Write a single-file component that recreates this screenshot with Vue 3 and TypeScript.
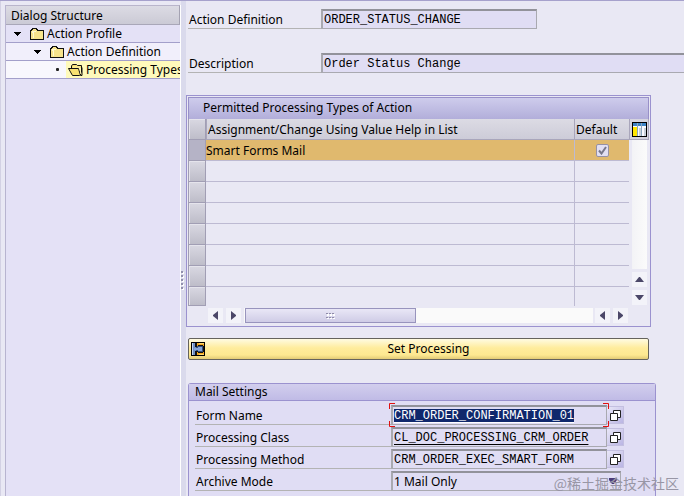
<script setup lang="ts">
import { onMounted, ref } from 'vue'

interface TreeNode {
  label: string
  level: number
  kind: 'branch' | 'leaf'
}

interface MailField {
  id: string
  label: string
  value: string
  underlined: boolean
}

const nodes: TreeNode[] = [
  { label: 'Action Profile', level: 0, kind: 'branch' },
  { label: 'Action Definition', level: 1, kind: 'branch' },
  { label: 'Processing Types', level: 2, kind: 'leaf' },
]

const action = ref('ORDER_STATUS_CHANGE')
const description = ref('Order Status Change')
const emptyRows = 7
const isDefault = ref(true)

const mailFields = ref<MailField[]>([
  { id: 'form-name', label: 'Form Name', value: 'CRM_ORDER_CONFIRMATION_01', underlined: true },
  { id: 'proc-class', label: 'Processing Class', value: 'CL_DOC_PROCESSING_CRM_ORDER', underlined: true },
  { id: 'proc-method', label: 'Processing Method', value: 'CRM_ORDER_EXEC_SMART_FORM', underlined: false },
])
const archiveMode = ref('1 Mail Only')

onMounted(() => {
  const field = document.getElementById('form-name') as HTMLInputElement | null
  field?.focus()
  field?.select()
})
</script>

<template>
  <div class="app">
    <nav class="sidebar" aria-label="Dialog Structure">
      <h2 class="tree-title">Dialog Structure</h2>
      <ul class="tree">
        <li v-for="node in nodes" :key="node.label" class="node" :class="['level-' + node.level, node.kind]">
          <button v-if="node.kind === 'branch'" class="toggle" type="button" :aria-label="'Collapse ' + node.label">
            <svg width="7" height="4" viewBox="0 0 7 4"><path d="M0 0h7v1H6v1H5v1H4v1H3V3H2V2H1V1H0z" fill="#000" /></svg>
          </button>
          <span v-else class="bullet"></span>
          <a class="node-link" href="#">
            <svg v-if="node.kind === 'branch'" width="15" height="12" viewBox="0 0 15 12" shape-rendering="crispEdges">
              <path d="M1 2h1V1h5v1h1v1h5v1h1v7H1z" fill="#f7e48c" />
              <path d="M2 3h4M2 4h1v6" stroke="#fffbd0" fill="none" />
              <path d="M.5 11.500V2.500h1v-1h1v-1h4v1h1v1h6v9z" fill="none" stroke="#111" />
            </svg>
            <svg v-else width="16" height="12" viewBox="0 0 16 12">
              <path d="M3.500 4.500V2l1-1.500h4l1 1h4v8l-2 2h-7l-4-7h10l2 7h1.500v-8" fill="#f7e070" stroke="#111" />
              <path d="M5 3h7M12 5l1 5" stroke="#fff6b0" fill="none" />
            </svg>
            <span>{{ node.label }}</span>
          </a>
        </li>
      </ul>
    </nav>

    <div class="splitter" role="separator" aria-orientation="vertical">
      <i v-for="n in 5" :key="n"></i>
    </div>

    <main class="content">
      <form class="head" @submit.prevent>
        <div class="line">
          <label class="caption" for="action">Action Definition</label>
          <input id="action" v-model="action" class="field short" type="text" readonly />
        </div>
        <div class="line">
          <label class="caption" for="description">Description</label>
          <input id="description" v-model="description" class="field long" type="text" readonly />
        </div>
      </form>

      <section class="panel">
        <h2 class="panel-title">Permitted Processing Types of Action</h2>
        <div class="grid">
          <table class="types">
            <colgroup>
              <col class="c-select" />
              <col />
              <col class="c-default" />
            </colgroup>
            <thead>
              <tr>
                <th class="selector"></th>
                <th>Assignment/Change Using Value Help in List</th>
                <th>Default</th>
              </tr>
            </thead>
            <tbody>
              <tr class="chosen">
                <td class="selector"></td>
                <td>Smart Forms Mail</td>
                <td class="check-cell">
                  <label class="check">
                    <input v-model="isDefault" type="checkbox" aria-label="Default" />
                    <svg width="9" height="9" viewBox="0 0 9 9"><path d="M1 4.500 3.500 7.500 8 1" fill="none" stroke="#77778a" stroke-width="2" /></svg>
                  </label>
                </td>
              </tr>
              <tr v-for="n in emptyRows" :key="n">
                <td class="selector"></td>
                <td></td>
                <td></td>
              </tr>
            </tbody>
          </table>

          <div class="side">
            <button class="config" type="button" aria-label="Table settings">
              <svg width="15" height="15" viewBox="0 0 15 15" shape-rendering="crispEdges">
                <path d="M0 0h15v15H0z" fill="#000" />
                <path d="M1 1h13v13H1z" fill="#fafaff" />
                <path d="M1 1h13v3H1z" fill="#3d83c5" />
                <path d="M1 5h4v9H1z" fill="#ffe600" />
                <path d="M5 1h1v13H5zM9 1h1v13H9z" fill="#8aa6bd" />
                <path d="M7 6h2v8H7zM12 6h2v8h-2z" fill="#c9d0d8" />
              </svg>
            </button>
            <div class="v-track"></div>
            <button class="arrow" type="button" aria-label="Scroll up">
              <svg width="9" height="5" viewBox="0 0 9 5"><path d="M0 5 4 0h1l4 5z" fill="#4b4768" /></svg>
            </button>
            <button class="arrow" type="button" aria-label="Scroll down">
              <svg width="9" height="5" viewBox="0 0 9 5"><path d="M0 0 4 5h1l4-5z" fill="#4b4768" /></svg>
            </button>
          </div>
        </div>

        <div class="h-scroll">
          <button class="arrow" type="button" aria-label="Scroll to start">
            <svg width="5" height="9" viewBox="0 0 5 9"><path d="M5 0 0 4v1l5 4z" fill="#4b4768" /></svg>
          </button>
          <button class="arrow" type="button" aria-label="Scroll left">
            <svg width="5" height="9" viewBox="0 0 5 9"><path d="M0 0 5 4v1l-5 4z" fill="#4b4768" /></svg>
          </button>
          <div class="h-track">
            <div class="thumb">
              <svg width="9" height="6" viewBox="0 0 9 6" shape-rendering="crispEdges">
                <path d="M1 1h2v2H1zM4 1h2v2H4zM7 1h2v2H7zM1 5h2v1H1zM4 5h2v1H4zM7 5h2v1H7z" fill="#fff" />
                <path d="M0 0h2v1H0zM3 0h2v1H3zM6 0h2v1H6zM0 4h2v1H0zM3 4h2v1H3zM6 4h2v1H6z" fill="#8f8ba8" />
              </svg>
            </div>
          </div>
          <button class="arrow" type="button" aria-label="Scroll right">
            <svg width="5" height="9" viewBox="0 0 5 9"><path d="M5 0 0 4v1l5 4z" fill="#4b4768" /></svg>
          </button>
          <button class="arrow" type="button" aria-label="Scroll to end">
            <svg width="5" height="9" viewBox="0 0 5 9"><path d="M0 0 5 4v1l-5 4z" fill="#4b4768" /></svg>
          </button>
        </div>
      </section>

      <button class="set-processing" type="button">
        <svg width="14" height="14" viewBox="0 0 14 14" shape-rendering="crispEdges">
          <path d="M0 0h14v14H0z" fill="#000" />
          <path d="M1 1h12v12H1z" fill="#f3a71f" />
          <path d="M1 1h4v12H1z" fill="#6f8fc4" />
          <path d="M1 1h1v12H1z" fill="#c3d5ef" />
          <path d="M4 1h2v3h1V3h5v1h1v6h-1v1H7v-1H6v3H4V9h2V5H4z" fill="#111" />
          <path d="M5 5h1V4h6v6H7V9H5z" fill="#34507f" />
          <path d="M3 6h4V5h4v4H7V8H3z" fill="#86a5d8" />
          <path d="M8 1h5v1H8zM8 12h5v1H8z" fill="#ffd76a" />
        </svg>
        <span>Set Processing</span>
      </button>

      <section class="mail">
        <h2 class="mail-title">Mail Settings</h2>
        <form class="mail-form" @submit.prevent>
          <div v-for="(field, index) in mailFields" :key="field.id" class="line">
            <label class="caption" :for="field.id">{{ field.label }}</label>
            <div class="holder" :class="{ active: index === 0 }">
              <input :id="field.id" v-model="field.value" class="field" :class="{ underlined: field.underlined }" type="text" spellcheck="false" />
              <svg v-if="index === 0" class="corner left" width="6" height="24" viewBox="0 0 6 24"><path d="M6 .5H.5V6M.5 18v5.500H6" fill="none" stroke="#e01010" /></svg>
              <svg v-if="index === 0" class="corner right" width="6" height="24" viewBox="0 0 6 24"><path d="M0 .5h5.500V6M5.500 18v5.500H0" fill="none" stroke="#e01010" /></svg>
            </div>
            <button class="help" type="button" :aria-label="'Value help for ' + field.label">
              <svg width="11" height="11" viewBox="0 0 11 11">
                <path d="M3.500.5h7v7h-7z" fill="#fff" stroke="#222" />
                <path d="M.5 3.500h7v7h-7z" fill="#fff" stroke="#222" />
              </svg>
            </button>
          </div>
          <div class="line">
            <label class="caption" for="archive">Archive Mode</label>
            <div class="select-holder">
              <select id="archive" v-model="archiveMode" class="field">
                <option>1 Mail Only</option>
              </select>
              <svg class="caret" width="8" height="6" viewBox="0 0 8 6"><path d="M0 0h8v2L5 6H3L0 2z" fill="#4b3a78" /></svg>
            </div>
          </div>
        </form>
      </section>
    </main>

    <div class="watermark">@稀土掘金技术社区</div>
  </div>
</template>

<style>
body {
  margin: 0;
}
</style>

<style scoped>
* {
  box-sizing: border-box;
}

.app {
  position: relative;
  display: grid;
  grid-template-columns: 176px 5px minmax(0, 1fr);
  height: 100vh;
  min-height: 496px;
  padding-left: 5px;
  overflow: hidden;
  border-top: 1px solid #a6a1cc;
  background: #e9e8f4;
  color: #000;
  font: 12px/18px "Noto Sans", "Open Sans", sans-serif;
  box-shadow: inset 1px 0 #d3d1e4;
}

button,
input,
select {
  margin: 0;
  padding: 0;
  border: 0;
  border-radius: 0;
  outline: 0;
  color: inherit;
  font: inherit;
}

h2 {
  margin: 0;
  font-size: 12px;
  font-weight: 400;
}

svg {
  display: block;
  flex: none;
}

.sidebar {
  margin-top: 4px;
  overflow: hidden;
  border-left: 1px solid #b8b4d0;
  border-right: 1px solid #fff;
  background: #e4e1f6;
}

.tree-title {
  height: 20px;
  padding-left: 5px;
  border-top: 1px solid #b9b5cb;
  border-right: 1px solid #a4a2b2;
  border-bottom: 1px solid #a9a7b8;
  background: linear-gradient(#dcdbe4, #cbcad5);
  line-height: 19px;
}

.tree {
  margin: 0;
  padding: 0;
  list-style: none;
}

.node {
  display: flex;
  align-items: stretch;
  height: 18px;
  border-bottom: 1px solid #a39fca;
  white-space: nowrap;
}

.level-0 { padding-left: 8px; }
.level-1 { padding-left: 28px; background: #f1effb; }
.level-2 { padding-left: 48px; background: #f8f7fd; }

.toggle,
.bullet {
  display: flex;
  align-items: center;
  width: 16px;
  background: none;
  flex: none;
}

.bullet {
  width: 12px;
}

.bullet::before {
  width: 3px;
  height: 3px;
  margin-left: 2px;
  border-radius: 1px;
  background: #222;
  content: "";
}

.node-link {
  display: flex;
  flex: 1;
  align-items: center;
  gap: 2px;
  color: inherit;
  line-height: 20px;
  text-decoration: none;
}

.leaf .node-link {
  padding-left: 2px;
  background: #fffabb;
}

.splitter {
  display: flex;
  flex-direction: column;
  gap: 2px;
  padding-top: 270px;
  background: #dadaec;
}

.splitter i {
  width: 2px;
  height: 2px;
  background: #9190ac;
  box-shadow: 1px 1px #fff;
}

.content {
  display: flex;
  flex-direction: column;
}

.head {
  display: grid;
  gap: 24px;
  padding: 8px 0 0 2px;
}

.line {
  display: flex;
  height: 20px;
}

.caption {
  width: 133px;
  flex: none;
  padding-left: 1px;
  border-bottom: 1px solid #b3b3b3;
  line-height: 21px;
}

.field {
  display: block;
  width: 100%;
  height: 20px;
  padding: 0 1px;
  border: solid #a9a9b0;
  border-width: 2px 1px 1px 2px;
  border-top-color: #92929a;
  background: #e0ddf4;
  font: 12px/16px "Liberation Mono", "Courier New", monospace;
}

.field.short {
  width: 216px;
}

.field.long {
  flex: 1;
  min-width: 0;
  border-right: 0;
}

.panel {
  margin: 22px 33px 0 0;
  padding: 1px;
  border: 1px solid #9b92cf;
}

.panel-title {
  height: 22px;
  padding-left: 14px;
  border: 1px solid #9890c8;
  border-bottom: 0;
  background: linear-gradient(#ceccec, #b2aeda);
  line-height: 20px;
}

.grid {
  display: flex;
}

.types {
  width: 0;
  flex: 1;
  table-layout: fixed;
  border-collapse: separate;
  border-spacing: 0;
}

.c-select { width: 18px; }
.c-default { width: 55px; }

th,
td {
  height: 21px;
  padding: 2px 0 0;
  border-bottom: 1px solid #bdbad2;
  border-left: 1px solid #bdbad2;
  font-weight: 400;
  line-height: 18px;
  text-align: left;
  white-space: nowrap;
}

td:nth-child(2) {
  border-left: 0;
}

th {
  padding-left: 1px;
  border-color: #a9a6bb;
  background: linear-gradient(#dcdbe4, #cdccd8);
}

.selector {
  border: 1px solid #a19eb4;
  border-top: 0;
  background: linear-gradient(#d9d8e2, #bebdc9);
  box-shadow: inset 1px 1px #e5e4ec;
}

.chosen td {
  background: #e0b96e;
}

.chosen .selector {
  background: #b5b3c6;
  box-shadow: none;
}

tbody tr:last-child td:not(.selector) {
  border-bottom: 0;
}

tbody tr:last-child td {
  height: 19px;
}

.check-cell {
  padding: 0;
}

.check {
  display: flex;
  align-items: center;
  justify-content: center;
  position: relative;
}

.check input {
  width: 13px;
  height: 13px;
  appearance: none;
  border: 1px solid #9691a5;
  border-radius: 2px;
  background: #e2dff2;
}

.check svg {
  position: absolute;
}

.side {
  display: flex;
  flex-direction: column;
  align-items: center;
  gap: 3px;
  width: 20px;
  padding-bottom: 1px;
}

.config {
  display: flex;
  align-items: center;
  justify-content: center;
  width: 20px;
  height: 21px;
  margin-bottom: -3px;
  border: solid #a9a6bb;
  border-width: 0 1px 1px;
  background: #d5d4df;
}

.v-track {
  flex: 1;
  width: 15px;
  background: linear-gradient(90deg, #f3f3f6, #fbfbfb);
}

.arrow {
  display: flex;
  align-items: center;
  justify-content: center;
  width: 15px;
  height: 15px;
  flex: none;
  background: #f3f3f9;
}

.h-scroll {
  display: flex;
  gap: 3px;
  padding: 2px 21px 2px 20px;
}

.h-track {
  flex: 1;
  height: 15px;
  margin-right: -1px;
  padding-left: 1px;
  background: #fafafa;
}

.thumb {
  display: flex;
  align-items: center;
  justify-content: center;
  width: 49%;
  height: 15px;
  border: 1px solid #9894bd;
  background: linear-gradient(#e9e7f6, #cfcce6);
}

.set-processing {
  display: flex;
  align-items: center;
  height: 22px;
  margin: 11px 35px 0 2px;
  padding: 0 2px;
  border: 1px solid #65635d;
  border-radius: 2px;
  background: linear-gradient(#fffbe2, #ffec9c 45%, #fde891 80%, #e2cb76);
  line-height: 20px;
}

.set-processing span {
  flex: 1;
  padding-left: 6px;
}

.mail {
  flex: 1;
  margin: 23px 28px 0 2px;
  border: 1px solid #9b92cf;
  border-bottom: 0;
  border-radius: 3px 3px 0 0;
  background: #e0ddf4;
}

.mail-title {
  height: 17px;
  padding-left: 6px;
  border-bottom: 1px solid #9b92cf;
  background: linear-gradient(#d2ceed, #c0bbe6);
  line-height: 16px;
}

.mail-form {
  display: grid;
  gap: 2px;
  padding: 4px 0 0 6px;
}

.mail-form .caption {
  width: 196px;
}

.holder {
  position: relative;
  width: 216px;
}

.active {
  z-index: 1;
}

.field::selection {
  background: #10286c;
  color: #fff;
}

.underlined {
  text-decoration: underline;
  text-underline-offset: 3px;
}

.corner {
  position: absolute;
  top: -2px;
}

.corner.left { left: -2px; }
.corner.right { right: -2px; }

.help {
  display: flex;
  align-items: center;
  justify-content: center;
  width: 17px;
  height: 18px;
  margin-top: 1px;
  border: 1px solid #c3bfe0;
  border-left: 0;
  background: linear-gradient(135deg, #e9e7f8, #bab5e3);
}

.select-holder {
  position: relative;
  width: 230px;
}

select.field {
  appearance: none;
  padding-left: 1px;
  font: 12px/18px "Noto Sans", "Open Sans", sans-serif;
}

.caret {
  position: absolute;
  top: 7px;
  right: 4px;
  pointer-events: none;
}

.watermark {
  position: absolute;
  right: 5px;
  bottom: 4px;
  color: #9896a5;
  font: 14px/18px "Noto Sans CJK SC", sans-serif;
  pointer-events: none;
}
</style>
